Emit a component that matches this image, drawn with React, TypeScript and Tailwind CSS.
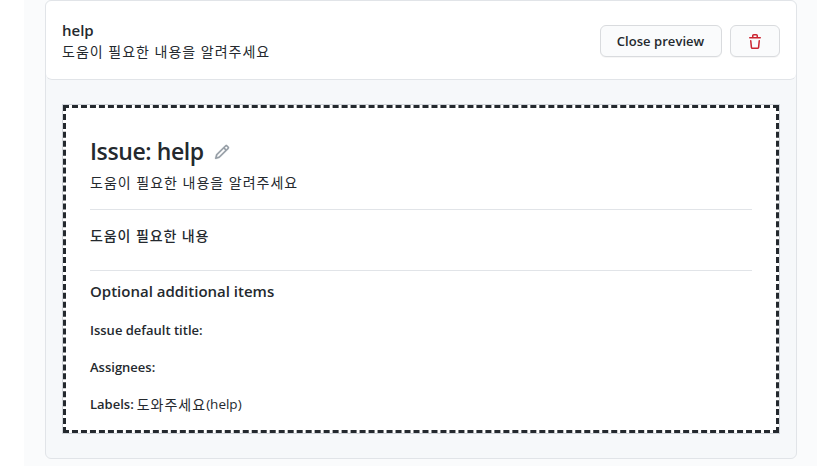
import React from "react";

const description = "도움이 필요한 내용을 알려주세요";

function TrashIcon() {
  return (
    <svg className="mt-0.5" width="16" height="16" viewBox="0 0 16 16" fill="currentColor" aria-hidden="true">
      <path
        fillRule="evenodd"
        d="M6.5 1.75a.25.25 0 01.25-.25h2.5a.25.25 0 01.25.25V3h-3V1.75zm4.5 0V3h2.25a.75.75 0 010 1.5H2.75a.75.75 0 010-1.5H5V1.75C5 .784 5.784 0 6.75 0h2.5C10.216 0 11 .784 11 1.75zM4.496 6.675a.75.75 0 10-1.492.15l.66 6.6A1.75 1.75 0 005.405 15h5.19c.9 0 1.652-.681 1.741-1.576l.66-6.6a.75.75 0 00-1.492-.149l-.66 6.6a.25.25 0 01-.249.225h-5.19a.25.25 0 01-.249-.225l-.66-6.6z"
      />
    </svg>
  );
}

function PencilIcon() {
  return (
    <svg className="mt-2 text-[#959da5]" width="16" height="16" viewBox="0 0 16 16" fill="currentColor" stroke="currentColor" strokeWidth="0.25" aria-hidden="true">
      <path
        fillRule="evenodd"
        d="M11.013 1.427a1.75 1.75 0 012.474 0l1.086 1.086a1.75 1.75 0 010 2.474l-8.61 8.61c-.21.21-.47.364-.756.445l-3.251.93a.75.75 0 01-.927-.928l.929-3.25a1.75 1.75 0 01.445-.758l8.61-8.61zm1.414 1.06a.25.25 0 00-.354 0L10.811 3.75l1.439 1.44 1.263-1.263a.25.25 0 000-.354l-1.086-1.086zM11.189 6.25L9.75 4.81l-6.286 6.287a.25.25 0 00-.064.108l-.558 1.953 1.953-.558a.249.249 0 00.108-.064l6.286-6.286z"
      />
    </svg>
  );
}

function Field({ label, children }: { label: string; children?: React.ReactNode }) {
  return (
    <div className="flex h-[21px] items-center gap-[3px] whitespace-nowrap">
      <span className="text-[13px] font-semibold">{label}</span>
      {children}
    </div>
  );
}

function Description() {
  return <p className="text-[14px] leading-[21px] tracking-[1px] whitespace-nowrap">{description}</p>;
}

function Header() {
  return (
    <header className="flex h-[79px] items-center justify-between rounded-md border-b border-[#e1e4e8] bg-white px-4 pt-0.5">
      <div className="-mt-0.5">
        <h3 className="text-[15px] leading-[22px] font-semibold">help</h3>
        <Description />
      </div>
      <div className="flex gap-2">
        <button className="h-8 w-[122px] rounded-md border border-[#d9dbde] bg-[#fafbfc] pt-0.5 pr-px text-[13px] font-semibold tracking-[0.05px] whitespace-nowrap shadow-[0_1px_0_rgba(27,31,35,0.04)]">
          Close preview
        </button>
        <button aria-label="Delete" className="flex h-8 w-[50px] items-center justify-center rounded-md border border-[#d9dbde] bg-[#fafbfc] text-[#cb2431] shadow-[0_1px_0_rgba(27,31,35,0.04)]">
          <TrashIcon />
        </button>
      </div>
    </header>
  );
}

export default function App() {
  return (
    <div className="h-[466px] w-[834px] overflow-hidden bg-white pr-[17px] pl-6 font-['Open_Sans','Noto_Sans_CJK_KR',sans-serif] text-[#24292e]">
      <main className="h-full bg-[#fafbfc] pr-5 pl-[21px]">
        <section className="h-[459px] rounded-md border border-[#e1e4e8] bg-[#f6f8fa]">
          <Header />
          <div className="px-4 pt-6">
            <div className="h-[330px] border border-[#d1d5da] bg-white">
              <div className="h-full border-[3px] border-dashed border-[#24292e] px-6 pt-7">
                <div className="flex h-[34px] items-start gap-[10px] whitespace-nowrap">
                  <h2 className="text-[23px] leading-[30px] font-semibold tracking-[-0.4px]">Issue: help</h2>
                  <PencilIcon />
                </div>
                <div className="mt-0.5">
                  <Description />
                </div>
                <hr className="mt-4 border-[#e1e4e8]" />
                <h4 className="mt-[15px] text-[14px] leading-[21px] font-medium tracking-[0.9px]">도움이 필요한 내용</h4>
                <hr className="mt-6 border-[#e1e4e8]" />
                <h3 className="mt-[9px] text-[15px] leading-[22px] font-semibold whitespace-nowrap">Optional additional items</h3>
                <div className="mt-[18px] flex flex-col gap-4">
                  <Field label="Issue default title:" />
                  <Field label="Assignees:" />
                  <Field label="Labels:">
                    <span className="flex text-[14px]">
                      <span className="tracking-[1px]">도와주세요</span>
                      <span className="text-[13.5px]">(help)</span>
                    </span>
                  </Field>
                </div>
              </div>
            </div>
          </div>
        </section>
      </main>
    </div>
  );
}
